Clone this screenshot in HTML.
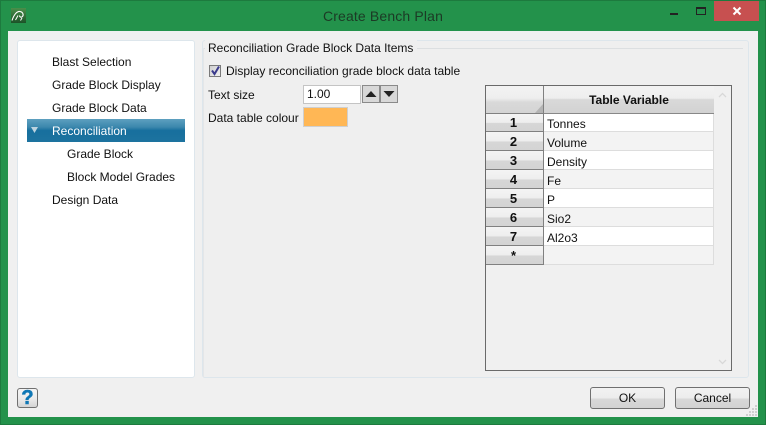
<!DOCTYPE html>
<html><head><meta charset="utf-8"><style>
html,body{margin:0;padding:0}
body{width:766px;height:425px;overflow:hidden;position:relative;background:#23924b;font-family:"Liberation Sans",sans-serif;font-size:12px;color:#111}
div,span{position:absolute;box-sizing:border-box;white-space:nowrap}
.t{line-height:16px;height:16px}
.rh{left:486px;width:58px;height:19px;background:linear-gradient(#f4f4f4 0,#eeeeee 50%,#d6d6d6 55%,#d4d4d4 100%);border-right:1px solid #808080;border-bottom:1px solid #808080;font-weight:bold;font-size:13px;text-align:center;line-height:20px;padding-right:2px;color:#111}
.c{left:544px;width:170px;height:19px;border-bottom:1px solid #ddd;border-right:1px solid #ddd;line-height:21px;padding:1px 0 0 3px}
.btn{height:22px;top:387px;border:1px solid #707070;border-radius:3px;background:linear-gradient(#f2f2f2 0,#ececec 50%,#d8d8d8 55%,#d2d2d2 100%);text-align:center;line-height:21px}
</style></head><body>
<div style="left:0;top:0;width:766px;height:425px;border:1px solid #1d7a3e"></div>
<svg style="position:absolute;left:11px;top:8px" width="15" height="15" viewBox="0 0 15 15"><defs><linearGradient id="g" x1="0" y1="0" x2="0" y2="1"><stop offset="0" stop-color="#4a8f4a"/><stop offset="1" stop-color="#1c5228"/></linearGradient></defs><rect width="15" height="15" fill="url(#g)"/><path d="M1 12.500C3 6.500 6 3 9 3.500C12 4 12.800 6.800 11.500 8.500C10.300 9.800 8.500 9 8.500 7.500" fill="none" stroke="#fff" stroke-width="1.100"/><path d="M4.500 12L7 7.500M9.500 12.500L11 10" stroke="#fff" stroke-width="1"/></svg>
<div class="t" style="left:0;width:766px;top:7px;text-align:center;font-size:14px;letter-spacing:.15px;color:#1c3a25;line-height:18px;height:18px">Create Bench Plan</div>
<div style="left:670px;top:13px;width:8px;height:2px;background:#222"></div>
<div style="left:696px;top:7px;width:10px;height:8px;border:1px solid #222;border-top:2px solid #222"></div>
<div style="left:714px;top:1px;width:45px;height:20px;background:#c75050"></div>
<svg style="position:absolute;left:732px;top:6px" width="10" height="10" viewBox="0 0 10 10"><path d="M1.500 1.500L8.500 8.500M8.500 1.500L1.500 8.500" stroke="#fff" stroke-width="2"/></svg>

<div style="left:8px;top:31px;width:750px;height:386px;background:#f0f0f0"></div>
<div style="left:17px;top:40px;width:178px;height:338px;background:#fff;border:1px solid #dde6ec;border-radius:3px"></div>
<div style="left:202px;top:40px;width:547px;height:338px;background:#efefef;border:1px solid #dde6ec;border-radius:3px"></div>

<div class="t" style="left:52px;top:54px">Blast Selection</div>
<div class="t" style="left:52px;top:77px">Grade Block Display</div>
<div class="t" style="left:52px;top:100px">Grade Block Data</div>
<div style="left:27px;top:119px;width:158px;height:23px;background:linear-gradient(#5d9fbf 0,#3c87ad 35%,#176f9e 50%,#1d739f 100%)"></div>
<svg style="position:absolute;left:31px;top:127px" width="7" height="7"><path d="M0 0H7L3.500 6Z" fill="#bcd3df"/></svg>
<div class="t" style="left:52px;top:123px;color:#fff">Reconciliation</div>
<div class="t" style="left:67px;top:146px">Grade Block</div>
<div class="t" style="left:67px;top:169px">Block Model Grades</div>
<div class="t" style="left:52px;top:192px">Design Data</div>

<div style="left:203px;top:48px;width:540px;height:1px;background:#dcdfe1"></div>
<div style="left:203px;top:48px;width:1px;height:329px;background:#e4e6e8"></div>
<div class="t" style="left:205px;top:40px;background:#efefef;padding:0 4px 0 3px">Reconciliation Grade Block Data Items</div>

<div style="left:209px;top:65px;width:12px;height:12px;background:linear-gradient(135deg,#cfcfcf,#f0f0f0);border:1px solid #7a7a7a"></div>
<svg style="position:absolute;left:209px;top:64px" width="13" height="13" viewBox="0 0 13 13"><path d="M3 6.500L5.500 10L10 2.500" fill="none" stroke="#3a3a8c" stroke-width="2"/></svg>
<div class="t" style="left:226px;top:63px">Display reconciliation grade block data table</div>

<div class="t" style="left:208px;top:87px">Text size</div>
<div style="left:303px;top:85px;width:58px;height:19px;background:#fff;border:1px solid #c4c4c4;line-height:17px;padding-left:3px">1.00</div>
<div style="left:362px;top:85px;width:18px;height:18px;background:#d8d8d8;border:1px solid #8a8a8a"></div>
<svg style="position:absolute;left:365px;top:91px" width="12" height="7"><path d="M6 0L11.500 6H.5Z" fill="#222"/></svg>
<div style="left:380px;top:85px;width:18px;height:18px;background:#d8d8d8;border:1px solid #8a8a8a"></div>
<svg style="position:absolute;left:383px;top:91px" width="12" height="7"><path d="M.5 0H11.500L6 6Z" fill="#222"/></svg>

<div class="t" style="left:208px;top:110px">Data table colour</div>
<div style="left:303px;top:107px;width:45px;height:20px;background:#ffb755;border:1px solid #cfcfcf"></div>

<div style="left:485px;top:85px;width:247px;height:286px;background:#f0f0f0;border:1px solid #6a6a6a"></div>
<div style="left:486px;top:86px;width:58px;height:28px;background:linear-gradient(#f3f3f3 0,#eeeeee 45%,#d9d9d9 60%,#d4d4d4 100%);border-right:1px solid #808080;border-bottom:1px solid #808080"></div>
<svg style="position:absolute;left:535px;top:104px" width="8" height="9"><path d="M8 0V9H0Z" fill="#b4b4b4"/></svg>
<div style="left:544px;top:86px;width:170px;height:28px;background:linear-gradient(#f3f3f3 0,#eeeeee 45%,#d9d9d9 50%,#d2d2d2 100%);border-bottom:1px solid #888;text-align:center;font-weight:bold;line-height:28px">Table Variable</div>

<div class="rh" style="top:114px;height:18px;line-height:18px">1</div><div class="c" style="top:114px;height:18px;line-height:19px;background:#fff">Tonnes</div>
<div class="rh" style="top:132px">2</div><div class="c" style="top:132px;background:#f3f3f3">Volume</div>
<div class="rh" style="top:151px">3</div><div class="c" style="top:151px;background:#fff">Density</div>
<div class="rh" style="top:170px">4</div><div class="c" style="top:170px;background:#f3f3f3">Fe</div>
<div class="rh" style="top:189px">5</div><div class="c" style="top:189px;background:#fff">P</div>
<div class="rh" style="top:208px">6</div><div class="c" style="top:208px;background:#f3f3f3">Sio2</div>
<div class="rh" style="top:227px">7</div><div class="c" style="top:227px;background:#fff">Al2o3</div>
<div class="rh" style="top:246px">*</div><div class="c" style="top:246px;background:#f3f3f3"></div>

<svg style="position:absolute;left:718px;top:92px" width="9" height="6"><path d="M1 5L4.500 1.500L8 5" fill="none" stroke="#d8d8d8" stroke-width="1.300"/></svg>
<svg style="position:absolute;left:718px;top:359px" width="9" height="6"><path d="M1 1L4.500 4.500L8 1" fill="none" stroke="#d8d8d8" stroke-width="1.300"/></svg>

<div style="left:17px;top:388px;width:21px;height:20px;border:1px solid #707070;border-radius:3px;background:linear-gradient(#f4f4f4 0,#ececec 50%,#d4d4d4 100%)"></div>
<div style="left:17px;top:386px;width:21px;height:24px;text-align:center;font-weight:bold;font-size:20px;line-height:24px;color:#0f77b5;-webkit-text-stroke:.6px #0f77b5">?</div>

<div class="btn" style="left:590px;width:75px">OK</div>
<div class="btn" style="left:675px;width:75px">Cancel</div>
<svg style="position:absolute;left:745px;top:404px" width="12" height="12"><path d="M10 1h2v2h-2zM7 4h2v2H7zM10 4h2v2h-2zM4 7h2v2H4zM7 7h2v2H7zM10 7h2v2h-2zM1 10h2v2H1zM4 10h2v2H4zM7 10h2v2H7zM10 10h2v2h-2z" fill="#cfcfcf"/></svg>
</body></html>
